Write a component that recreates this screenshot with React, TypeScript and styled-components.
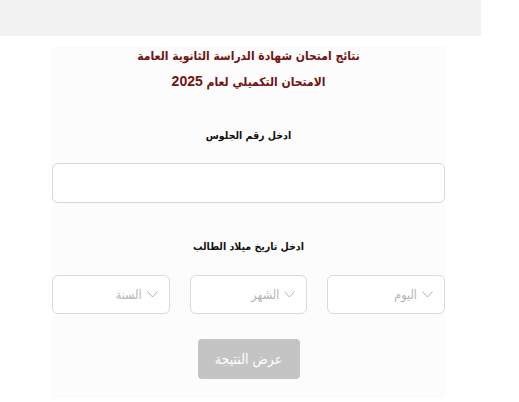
import React, { FC } from 'react';
import styled, { createGlobalStyle } from 'styled-components';

const Global = createGlobalStyle`
    body {
        margin: 0;
        background: #ffffff;
        font-family: "DejaVu Sans Condensed", "DejaVu Sans", "Liberation Sans", sans-serif;
    }
`;

const TopBar = styled.div`
    width: 481px;
    height: 36px;
    background: #f2f2f2;
`;

const Panel = styled.div`
    direction: rtl;
    width: 393px;
    margin: 10px 0 0 52px;
    padding: 0 0 19px;
    background: #fcfcfc;
    display: flex;
    flex-direction: column;
    align-items: center;
`;

const Title = styled.h1`
    margin: -2px 0 0;
    font-size: 12px;
    line-height: 25px;
    font-weight: bold;
    color: #731313;
    text-align: center;
`;

const Year = styled.span`
    font-family: "Liberation Sans", Arial, sans-serif;
    font-size: 14px;
`;

const Label = styled.div<{ $top: number }>`
    margin-top: ${p => p.$top}px;
    font-size: 10.5px;
    font-weight: bold;
    color: #111;
    line-height: 16px;
`;

const Field = styled.div`
    align-self: stretch;
    height: 38px;
    margin-top: 20px;
    border: 1px solid #d8d8d8;
    border-radius: 6px;
    background: #fff;
`;

const SelectRow = styled.div`
    align-self: stretch;
    display: grid;
    grid-template-columns: repeat(3, 1fr);
    gap: 20px;
    margin-top: 21px;
`;

const Select = styled.div`
    height: 37px;
    border: 1px solid #dadada;
    border-radius: 6px;
    background: #fff;
    display: flex;
    align-items: center;
    gap: 5px;
    padding-right: 11px;
    font-size: 12.5px;
    color: #b5b5b5;
`;

const Button = styled.div`
    margin-top: 25px;
    width: 102px;
    height: 40px;
    border-radius: 4px;
    background: #c4c4c4;
    color: #ffffff;
    font-size: 14px;
    display: flex;
    align-items: center;
    justify-content: center;
`;

const Chevron: FC = () => (
    <svg width="11" height="7" viewBox="0 0 11 7">
        <path d="M0.5 0.5 L5.5 6 L10.5 0.5" fill="none" stroke="#b0b0b0" strokeWidth="1" />
    </svg>
);

const App: FC = () => (
    <>
        <Global />
        <TopBar />
        <Panel>
            <Title>
                نتائج امتحان شهادة الدراسة الثانوية العامة
                <br />
                الامتحان التكميلي لعام <Year>2025</Year>
            </Title>
            <Label $top={32}>ادخل رقم الجلوس</Label>
            <Field />
            <Label $top={35}>ادخل تاريخ ميلاد الطالب</Label>
            <SelectRow>
                {['اليوم', 'الشهر', 'السنة'].map(t => (
                    <Select key={t}>
                        <Chevron />
                        <span>{t}</span>
                    </Select>
                ))}
            </SelectRow>
            <Button>عرض النتيجة</Button>
        </Panel>
    </>
);

export default App;
